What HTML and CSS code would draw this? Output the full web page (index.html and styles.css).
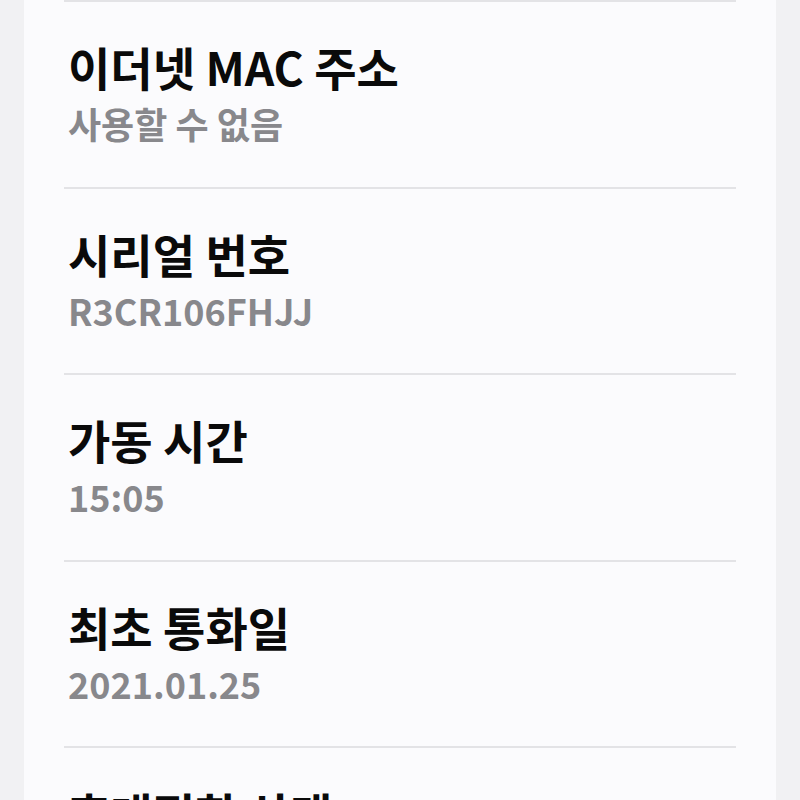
FILE: index.html
```html
<!DOCTYPE html>
<html>
<head>
    <title>상태 정보</title>
    <link rel="stylesheet" href="styles.css">
</head>
<body>
    <div class="card">
        <div class="row">
            <div class="title">이더넷 MAC 주소</div>
            <div class="value">사용할 수 없음</div>
        </div>
        <div class="row">
            <div class="title">시리얼 번호</div>
            <div class="value">R3CR106FHJJ</div>
        </div>
        <div class="row">
            <div class="title">가동 시간</div>
            <div class="value">15:05</div>
        </div>
        <div class="row">
            <div class="title">최초 통화일</div>
            <div class="value">2021.01.25</div>
        </div>
        <div class="row">
            <div class="title">휴대전화 상태</div>
            <div class="value">공식</div>
        </div>
    </div>
</body>
</html>
```

FILE: styles.css
```css
html, body {
    margin: 0;
    padding: 0;
    height: 100%;
    overflow: hidden;
}

body {
    font-family: "Noto Sans CJK KR", "Noto Sans", sans-serif;
    background-color: #f1f1f3;
}

.card {
    margin: 0 24px;
    min-height: 100%;
    background-color: #fbfbfd;
    padding: 0 40px;
}

.row {
    border-top: 2px solid #e3e3e6;
    padding: 37px 0 42.5px 4px;
}

.title {
    font-size: 46px;
    line-height: 54px;
    font-weight: bold;
    color: #0a0a0a;
    margin-bottom: 10px;
}

.value {
    font-size: 36px;
    line-height: 41px;
    font-weight: bold;
    color: #88888c;
}
```
